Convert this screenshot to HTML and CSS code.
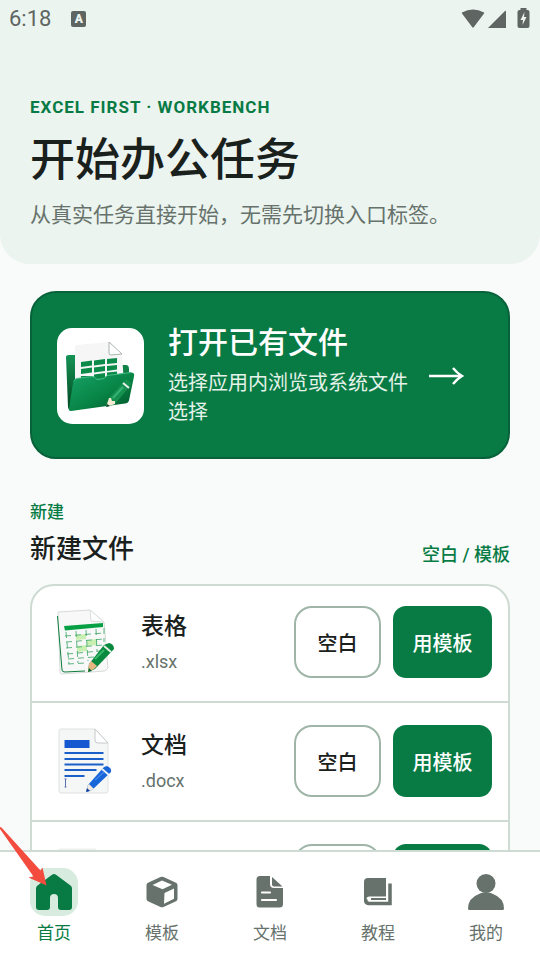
FILE: index.html
```html
<!DOCTYPE html>
<html lang="zh-CN">
  <head>
    <meta charset="UTF-8" />
    <meta name="viewport" content="width=device-width, initial-scale=1" />
    <title>开始办公任务</title>
    <link rel="stylesheet" href="styles.css">
  </head>
  <body>
    <div class="app">
      <main class="content">
        <!-- 顶部 -->
        <header class="hero">
          <div class="status">
            <span class="time">6:18</span>
            <span class="ime">A</span>
            <svg class="signals" width="70" height="22" viewBox="0 0 70 22" fill="#5f6562">
              <path d="M2 4.500Q13 -1.500 24 4.500Q24.500 5 24 5.600L13.700 19.300Q13 20 12.300 19.300L2 5.600Q1.500 5 2 4.500Z" />
              <path d="M28 20 45 3Q46 2.200 46 3.500V20H28.500Q27.500 20 28 19.200Z" />
              <path d="M61 2V0h6v2h1q2 0 2 2v14q0 2-2 2h-8q-2 0-2-2V4q0-2 2-2Z" transform="translate(-.500)" />
              <path d="M64.500 4 60.500 12h2.500l-.5 5 4-8h-2.500Z" fill="#ebf4ef" />
            </svg>
          </div>
          <p class="eyebrow">EXCEL FIRST · WORKBENCH</p>
          <h1>开始办公任务</h1>
          <p class="lead">从真实任务直接开始，无需先切换入口标签。</p>
        </header>

        <!-- 打开文件 -->
        <a class="open-card" href="#">
          <span class="open-icon">
            <svg width="87" height="96" viewBox="0 0 87 96">
              <defs>
                <linearGradient id="folder" x1="0" y1="0" x2="1" y2="1">
                  <stop offset="0" stop-color="#18a266" />
                  <stop offset=".55" stop-color="#078446" />
                  <stop offset="1" stop-color="#015126" />
                </linearGradient>
                <linearGradient id="back" x1="0" y1="0" x2="0" y2="1">
                  <stop offset="0" stop-color="#159354" />
                  <stop offset="1" stop-color="#00451f" />
                </linearGradient>
              </defs>
              <path d="M9 29q0-2 3-2h11l3 10h43q3 0 3 4v26L13 82q-2-1-2-3Z" fill="url(#back)" />
              <path d="M18 19q0-2 2-2l31-3 14 12 2 30H18Z" fill="#f5f6f5" />
              <path d="M52 14v11q0 2 2 2l11-1Z" fill="#fff" stroke="#aab4ae" />
              <g fill="#0c8a4a">
                <path d="m24 34 11-1.500v5L24 39ZM37 32.500 48 31v5l-11 1.500ZM50 31l10-1v5l-10 1Z" />
                <path d="m24 41 11-1.500v5L24 46ZM37 39.500l11-1.500v5l-11 1.500ZM50 38l10-1v4.500l-10 1.500Z" />
                <path d="m37 46.500 11-1.500v6H37ZM50 44.500l10-1V49H50ZM24 48h11v4H24Z" />
              </g>
              <path d="M16 55q0-4 4-4.500l15-2q3 0 5 3l7-1 3-3 24-3q4 0 3 4l-5 24q-1 3-4 3L14 83q-3 0-2-3Z" fill="url(#folder)" />
              <path d="M17 53q1-2 3-2.500l15-2q3 0 5 3l7-1 3-3 24-3" fill="none" stroke="#43bd83" />
              <path d="M68 52q2-1 4 1 3 2 1 5L58 76l-9 3 3-9Z" fill="#15904f" />
              <path d="m66 55 6 5" stroke="#e9f1ed" stroke-width="2" />
              <path d="m56 70 10-11" stroke="#35b275" stroke-width="2" />
              <path d="m52 70 2 0 1 3 3 0 0 3-9 3Z" fill="#f4ead4" />
              <path d="m49 79 1-3 3 2Z" fill="#033d1d" />
            </svg>
          </span>
          <span class="open-text">
            <strong>打开已有文件</strong>
            <span>选择应用内浏览或系统文件选择</span>
          </span>
          <svg class="arrow" width="36" height="20" viewBox="0 0 36 20" fill="none" stroke="#fff" stroke-width="2.400">
            <path d="M1 10H34M25 2Q29 7 34 10Q29 13 25 18" />
          </svg>
        </a>

        <!-- 新建文件 -->
        <section class="create">
          <div class="section-head">
            <div>
              <p class="label">新建</p>
              <h2>新建文件</h2>
            </div>
            <span class="hint">空白 / 模板</span>
          </div>
          <ul class="file-list">
            <li>
              <svg class="file-icon" width="66" height="66" viewBox="0 0 66 66">
                <path d="m4 3 32-2 14 12 4 46-3 3-43 3q-2 0-2-2Z" fill="#f7f8f7" stroke="#d7dcd9" />
                <path d="M3.500 7 8 61q0 2 3 2l20-1" fill="none" stroke="#0b7d3c" />
                <path d="m36 1 1 11 13 1Z" fill="#fff" stroke="#dadfdc" />
                <path d="m10 17 39-3v4l-38 3.500Z" fill="#07a044" />
                <g fill="#c9efb3">
                  <path d="m22 26 10-1v5l-10 1ZM33 31l10-1v6l-10 1ZM23 37l10-1v6l-10 1Z" />
                </g>
                <path d="m11 27 39-3M12 33l38-3M12 39l38-3M13 45l33-3M14 50l26-2M14 55l18-1M12 23l3 32M22 22l2 32M32 21l2 31M42 20l1 23M50 19v14" stroke="#3ba566" stroke-width=".8" fill="none" stroke-dasharray="6 4" />
                <path d="m50 36 5-2q5 1 5 6L41 60l-7 3 1-8Z" fill="#078a3d" />
                <path d="m50 37 7 6" stroke="#e4f1e5" stroke-width="2" />
                <path d="m41 50 9-9" stroke="#38b86b" stroke-width="2" />
                <path d="m37 52 6 5-3 3-6 3 1-8Z" fill="#e7b583" />
                <path d="m34 63 1-4 3 3Z" fill="#04692d" />
              </svg>
              <div class="file-name">
                <h3>表格</h3>
                <p>.xlsx</p>
              </div>
              <button class="blank" type="button">空白</button>
              <button class="template" type="button">用模板</button>
            </li>
            <li>
              <svg class="file-icon" width="66" height="66" viewBox="0 0 66 66">
                <path d="M7 1h34l13 14v48q0 2-2 2H7q-2 0-2-2V3q0-2 2-2Z" fill="#f5f6f6" stroke="#dfe2e2" />
                <path d="M41 1v11q0 3 3 3h10Z" fill="#fff" stroke="#c5c9cc" />
                <path d="M10.500 12h25v8h-25Z" fill="#1558cf" />
                <path d="M10.500 25h39M10.500 31h39M10.500 36.500h39M10.500 42h32M10.500 48h20" stroke="#1b5fc9" stroke-width="2" />
                <path d="M10.500 51h2M11.500 51v8M10.500 59h2" stroke="#5873ae" />
                <path d="m50 39 3-1q5 2 4 6L38 62l-6 2 2-7Z" fill="#1765d8" />
                <path d="m48 41 7 6" stroke="#e8eef8" stroke-width="2" />
                <path d="m41 52 9-8" stroke="#4184e7" stroke-width="1.500" />
                <path d="m35 56 5 5-2 1-6 2 2-7Z" fill="#f1e9df" />
                <path d="m32 64 1-4 3 3Z" fill="#083d9b" />
              </svg>
              <div class="file-name">
                <h3>文档</h3>
                <p>.docx</p>
              </div>
              <button class="blank" type="button">空白</button>
              <button class="template" type="button">用模板</button>
            </li>
            <li>
              <svg class="file-icon" width="66" height="66" viewBox="0 0 66 66">
                <path d="M7 2h34l13 14v47H5V2Z" fill="#f5f6f6" stroke="#eceeed" />
                <path d="M11 20h30v22H11Z" fill="#dc6330" />
              </svg>
              <div class="file-name">
                <h3>演示</h3>
                <p>.pptx</p>
              </div>
              <button class="blank" type="button">空白</button>
              <button class="template" type="button">用模板</button>
            </li>
          </ul>
        </section>
      </main>

      <!-- 底部导航 -->
      <nav class="tabbar">
        <a class="active" href="#">
          <span class="tab-icon">
            <svg width="36" height="36" viewBox="0 0 36 36" fill="currentColor">
              <path d="M16 .7q2-1.400 4 0L34.500 11.500Q36 12.700 36 14.500V33q0 3-3 3h-8q-3 0-3-3V24a4 4 0 0 0-8 0v9q0 3-3 3H3q-3 0-3-3V14.500q0-1.800 1.500-3Z" />
            </svg>
          </span>
          首页
        </a>
        <a href="#">
          <span class="tab-icon">
            <svg width="32" height="32" viewBox="0 0 32 32">
              <path d="M14.500 1q1.500-.7 3 0L30 6.700q1.500.7 1.500 2.300v14q0 1.500-1.500 2.200L17.500 31q-1.500.7-3 0L2 25.200Q.5 24.500.5 23V9Q.5 7.400 2 6.700Z" fill="currentColor" />
              <path d="M6.500 9 16 4.500 26 8.800 16.500 13.200ZM18.500 17 28 12.500V22.800L18 27.800Z" fill="#fff" />
            </svg>
          </span>
          模板
        </a>
        <a href="#">
          <span class="tab-icon">
            <svg width="28" height="32" viewBox="0 0 28 32" fill="currentColor">
              <path d="M4 0h10v8q0 4 4 4h9v16q0 3.500-3.500 3.500h-20Q.5 31.500.5 28V3.500Q.5 0 4 0Z" />
              <path d="M16 1v7.500q0 2 2 2h8.500Z" />
              <path d="M6 16.500h8M6 24h14" stroke="#fff" stroke-width="2.200" stroke-linecap="round" />
            </svg>
          </span>
          文档
        </a>
        <a href="#">
          <span class="tab-icon">
            <svg width="28" height="28" viewBox="0 0 28 28" fill="none" stroke="currentColor">
              <path d="M4 0h18v23H0V4Q0 0 4 0Z" fill="currentColor" stroke="none" />
              <path d="M22 18.500H5.500q-3 0-3 2.500t3 2.500H22Z" fill="#fff" stroke="none" />
              <path d="M7 21h15" stroke-width="2" />
              <path d="M26 5.500V25.500H5Q1.500 25.500 1.500 21" stroke-width="3.500" />
            </svg>
          </span>
          教程
        </a>
        <a href="#">
          <span class="tab-icon">
            <svg width="36" height="36" viewBox="0 0 36 36" fill="currentColor">
              <circle cx="18" cy="9.500" r="9.500" />
              <path d="M12 19.500Q18 17 24 19.500 36 24 36 34.500 36 36 34.500 36H1.500Q0 36 0 34.500 0 24 12 19.500Z" />
            </svg>
          </span>
          我的
        </a>
      </nav>

      <!-- 指向首页的箭头 -->
      <svg class="pointer" width="48" height="62" viewBox="0 0 48 62" fill="#f34b3d">
        <path d="M0 1 1.500 1.500 40.500 44.500 42.500 41.500 46.500 59.500 28.500 51.500 33.500 50.500 0 3Z" />
      </svg>
    </div>
  </body>
</html>
```

FILE: styles.css
```css
html,
body,
ul,
h1,
h2,
h3,
p {
  margin: 0;
  padding: 0;
}
ul {
  list-style: none;
}
a {
  color: inherit;
  text-decoration: none;
}
svg {
  display: block;
  flex-shrink: 0;
}
body {
  background-color: #f9fbfa;
  color: #1a211d;
  font-family: Roboto, "Noto Sans CJK SC", sans-serif;
}

/* 整体 */
.app {
  position: relative;
  display: flex;
  flex-direction: column;
  height: 100vh;
}
.content {
  flex: 1;
  min-height: 0;
  overflow-y: auto;
  scrollbar-width: none;
}

/* 顶部 */
.hero {
  padding: 0 30px 34px;
  background-color: #ebf4ef;
  border-radius: 0 0 30px 30px;
}
.status {
  display: flex;
  align-items: center;
  height: 37px;
  margin: 0 -21px 58px;
  padding-right: 1px;
  color: #5f6562;
}
.time {
  font-size: 22px;
}
.ime {
  width: 15px;
  height: 16px;
  margin-left: 20px;
  border-radius: 2px;
  background-color: #5f6562;
  color: #ebf4ef;
  font-size: 12px;
  font-weight: 900;
  line-height: 16px;
  text-align: center;
}
.signals {
  margin-left: auto;
}
.eyebrow {
  color: #087b45;
  font-size: 17px;
  font-weight: 700;
  line-height: 24px;
  letter-spacing: 1px;
}
h1 {
  margin-top: 12px;
  font-size: 45px;
  font-weight: 500;
  line-height: 60px;
}
.lead {
  margin-top: 9px;
  color: #66726b;
  font-size: 21px;
  line-height: 30px;
}

/* 打开文件卡片 */
.open-card {
  display: flex;
  align-items: center;
  margin: 27px 30px 0;
  padding: 31px 44px 30px 25px;
  border: 2px solid #07623a;
  border-radius: 26px;
  background-color: #087b45;
  color: #fff;
}
.open-icon {
  overflow: hidden;
  border-radius: 15px;
  background-color: #fff;
}
.open-text {
  flex: 1;
  margin: 0 16px 0 24px;
  color: #e4f2e9;
  font-size: 20px;
  line-height: 29px;
}
.open-text strong {
  display: block;
  margin-bottom: 7px;
  color: #fff;
  font-size: 30px;
  font-weight: 500;
  line-height: 38px;
}

/* 新建文件 */
.create {
  padding: 40px 30px 24px;
}
.section-head {
  display: flex;
  align-items: flex-end;
  justify-content: space-between;
  margin-bottom: 16px;
}
.label,
.hint {
  color: #087b45;
  font-size: 17px;
  font-weight: 500;
  line-height: 26px;
}
.hint {
  font-size: 18px;
}
h2 {
  margin-top: 5px;
  font-size: 26px;
  font-weight: 500;
  line-height: 38px;
}
.file-list {
  border: 2px solid #cddbd2;
  border-radius: 24px;
  background-color: #fff;
}
.file-list li {
  display: flex;
  align-items: center;
  padding: 22px 16px 23px 22px;
}
.file-list li:first-child {
  padding-top: 20px;
}
.file-list li + li {
  border-top: 2px solid #cddbd2;
}
.file-name {
  flex: 1;
  margin-left: 21px;
}
.file-name h3 {
  font-size: 23px;
  font-weight: 500;
  line-height: 34px;
}
.file-name p {
  margin-top: 6px;
  color: #66726b;
  font-size: 18px;
  line-height: 24px;
}
.file-list button {
  height: 72px;
  padding: 0;
  font-family: inherit;
  font-size: 20px;
  font-weight: 500;
}
.blank {
  width: 87px;
  border: 2px solid #9eb5a7;
  border-radius: 18px;
  background-color: #fff;
  color: #1a211d;
}
.template {
  width: 99px;
  margin-left: 12px;
  border: 0;
  border-radius: 13px;
  background-color: #087b45;
  color: #fff;
}

/* 底部导航 */
.tabbar {
  display: flex;
  padding: 16px 0 14px;
  border-top: 2px solid #cddbd2;
  background-color: #fff;
}
.tabbar a {
  display: flex;
  flex: 1;
  flex-direction: column;
  align-items: center;
  gap: 4px;
  color: #66726b;
  font-size: 17px;
  line-height: 26px;
}
.tab-icon {
  display: flex;
  align-items: center;
  justify-content: center;
  width: 48px;
  height: 48px;
  border-radius: 15px;
}
.tabbar .active {
  color: #087b45;
}
.active .tab-icon {
  background-color: #d8ebdf;
}

/* 箭头 */
.pointer {
  position: absolute;
  bottom: 72px;
  left: 0;
}
```
